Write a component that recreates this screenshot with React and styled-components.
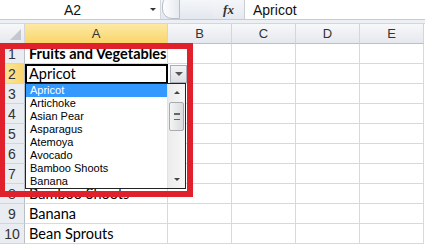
import React from 'react';
import styled, { createGlobalStyle, css } from 'styled-components';

const GlobalStyle = createGlobalStyle`
  html, body { margin: 0; padding: 0; background: #fff; }
  body { font-family: Lato, "Liberation Sans", sans-serif; }
`;

const Sheet = styled.div`
  position: relative;
  width: 425px;
  height: 244px;
  overflow: hidden;
  background: #fff;
`;

const FormulaBar = styled.div`
  display: flex;
  height: 19px;
  border-bottom: 1px solid #c6cbd2;
  font-family: "Liberation Sans", Arial, sans-serif;
  font-size: 14px;
  color: #111;
`;

const NameBox = styled.div`
  width: 145px;
  display: flex;
  align-items: center;
  justify-content: center;
`;

const NameArrow = styled.div`
  width: 15px;
  display: flex;
  align-items: center;
  justify-content: center;
  &::after {
    content: '';
    border-left: 3px solid transparent;
    border-right: 3px solid transparent;
    border-top: 3px solid #333;
  }
`;

const Grip = styled.div`
  width: 52px;
  display: flex;
  align-items: flex-start;
  background: linear-gradient(#f4f6f9, #e3e7ee);
  border-left: 1px solid #d5d9df;
`;

const Knob = styled.div`
  width: 16px;
  height: 22px;
  margin-top: -5px;
  margin-left: 1px;
  border: 1px solid #b8bec8;
  border-radius: 10px 0 0 10px;
  background: linear-gradient(90deg, #fdfdfe, #e6e9ee);
`;

const Fx = styled.div`
  width: 31px;
  display: flex;
  align-items: center;
  justify-content: center;
  border-right: 1px solid #c9ced6;
  background: linear-gradient(#f4f6f9, #e6e9ef);
  font-family: "Liberation Serif", serif;
  font-style: italic;
  font-weight: bold;
  font-size: 13px;
  color: #333;
`;

const FormulaText = styled.div`
  flex: 1;
  display: flex;
  align-items: center;
  padding-left: 8px;
`;

const Strip = styled.div`
  height: 3px;
  background: #eceff3;
  border-bottom: 1px solid #d3d7dd;
`;

const Grid = styled.div`
  display: grid;
  grid-template-columns: 25px 143px 64px 64px 64px 64px;
  grid-auto-rows: 20px;
`;

const ColHead = styled.div`
  display: flex;
  align-items: center;
  justify-content: center;
  font-family: "Liberation Sans", Arial, sans-serif;
  font-size: 13px;
  color: #333;
  border-right: 1px solid #d2d6dc;
  border-bottom: 1px solid #b9bec7;
  background: ${p => (p.$active ? 'linear-gradient(#fde9a6, #f9d56b)' : 'linear-gradient(#f7f8fa, #e5e8ed)')};
  ${p => p.$active && css`border-bottom-color: #f2a93b;`}
`;

const Corner = styled(ColHead)`
  justify-content: flex-end;
  align-items: flex-end;
  padding: 0 3px 3px 0;
  &::after {
    content: '';
    border-left: 11px solid transparent;
    border-bottom: 11px solid #c4c8ce;
  }
`;

const RowHead = styled.div`
  display: flex;
  align-items: center;
  justify-content: center;
  font-family: "Liberation Sans", Arial, sans-serif;
  font-size: 14px;
  color: #333;
  border-right: 1px solid #b9bec7;
  border-bottom: 1px solid #d2d6dc;
  background: ${p => (p.$active ? 'linear-gradient(90deg, #fde9a6, #f9d56b)' : '#e9ecf0')};
`;

const Cell = styled.div`
  display: flex;
  align-items: center;
  padding-left: 4px;
  font-size: 14.5px;
  font-weight: ${p => (p.$bold ? 700 : 400)};
  color: #000;
  white-space: nowrap;
  overflow: visible;
  border-right: 1px solid #d9d9d9;
  border-bottom: 1px solid #d9d9d9;
  ${p => p.$selected && css`
    outline: 2px solid #000;
    outline-offset: -2px;
  `}
`;

const RedFrame = styled.div`
  position: absolute;
  left: -1px;
  top: 43px;
  width: 182px;
  height: 142px;
  border: 6px solid #e0202b;
`;

const DropButton = styled.div`
  position: absolute;
  left: 170px;
  top: 65px;
  width: 15px;
  height: 16px;
  border: 1px solid #a9afb8;
  background: linear-gradient(#f3f4f6, #dcdfe3);
  display: flex;
  align-items: center;
  justify-content: center;
  &::after {
    content: '';
    border-left: 4px solid transparent;
    border-right: 4px solid transparent;
    border-top: 4px solid #555;
  }
`;

const ListBox = styled.div`
  position: absolute;
  left: 25px;
  top: 83px;
  width: 159px;
  height: 104px;
  border: 1px solid #222;
  background: #fff;
  display: flex;
`;

const Items = styled.div`
  flex: 1;
  display: flex;
  flex-direction: column;
`;

const Item = styled.div`
  height: 13px;
  line-height: 13px;
  padding-left: 4px;
  font-family: "Liberation Sans", Tahoma, sans-serif;
  font-size: 11px;
  color: ${p => (p.$hot ? '#fff' : '#000')};
  background: ${p => (p.$hot ? '#3399ff' : 'transparent')};
`;

const ScrollBar = styled.div`
  width: 17px;
  display: flex;
  flex-direction: column;
  align-items: center;
  background: linear-gradient(90deg, #ececec, #f6f6f6);
  border-left: 1px solid #e2e2e2;
`;

const ScrollArrow = styled.div`
  height: 17px;
  display: flex;
  align-items: center;
  justify-content: center;
  &::after {
    content: '';
    border-left: 3px solid transparent;
    border-right: 3px solid transparent;
    ${p => (p.$up ? 'border-bottom: 3px solid #444;' : 'border-top: 3px solid #444;')}
  }
`;

const Thumb = styled.div`
  width: 13px;
  height: 27px;
  margin-top: 1px;
  border: 1px solid #a8acb2;
  border-radius: 2px;
  background: linear-gradient(90deg, #f4f4f4, #d9dbde);
  display: flex;
  align-items: center;
  justify-content: center;
  &::after {
    content: '';
    width: 6px;
    height: 5px;
    border-top: 1px solid #666;
    border-bottom: 1px solid #666;
    box-shadow: inset 0 2px 0 -1px #666;
  }
`;

const Spacer = styled.div`
  flex: 1;
`;

const columns = ['A', 'B', 'C', 'D', 'E'];
const cellText = {
  1: 'Fruits and Vegetables',
  2: 'Apricot',
  8: 'Bamboo Shoots',
  9: 'Banana',
  10: 'Bean Sprouts',
};
const options = ['Apricot', 'Artichoke', 'Asian Pear', 'Asparagus', 'Atemoya', 'Avocado', 'Bamboo Shoots', 'Banana'];

export default function App() {
  const rows = Array.from({ length: 10 }, (_, i) => i + 1);
  return (
    <Sheet>
      <GlobalStyle />
      <FormulaBar>
        <NameBox>A2</NameBox>
        <NameArrow />
        <Grip><Knob /></Grip>
        <Fx>fx</Fx>
        <FormulaText>Apricot</FormulaText>
      </FormulaBar>
      <Strip />
      <Grid>
        <Corner />
        {columns.map(c => (
          <ColHead key={c} $active={c === 'A'}>{c}</ColHead>
        ))}
        {rows.map(r => (
          <React.Fragment key={r}>
            <RowHead $active={r === 2}>{r}</RowHead>
            <Cell $bold={r === 1} $selected={r === 2}>{cellText[r] || ''}</Cell>
            {columns.slice(1).map(c => <Cell key={c} />)}
          </React.Fragment>
        ))}
      </Grid>
      <DropButton />
      <ListBox>
        <Items>
          {options.map((o, i) => <Item key={o} $hot={i === 0}>{o}</Item>)}
        </Items>
        <ScrollBar>
          <ScrollArrow $up />
          <Thumb />
          <Spacer />
          <ScrollArrow />
        </ScrollBar>
      </ListBox>
      <RedFrame />
    </Sheet>
  );
}
